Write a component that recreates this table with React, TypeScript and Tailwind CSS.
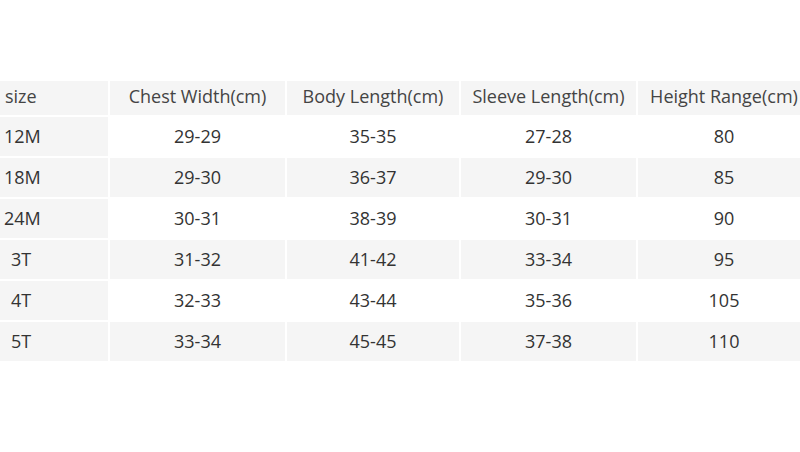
const header = ["size", "Chest Width(cm)", "Body Length(cm)", "Sleeve Length(cm)", "Height Range(cm)"];

const rows = [
  ["12M", "29-29", "35-35", "27-28", "80"],
  ["18M", "29-30", "36-37", "29-30", "85"],
  ["24M", "30-31", "38-39", "30-31", "90"],
  ["3T", "31-32", "41-42", "33-34", "95"],
  ["4T", "32-33", "43-44", "35-36", "105"],
  ["5T", "33-34", "45-45", "37-38", "110"],
];

export default function App() {
  return (
    <div className="h-[452px] w-[800px] overflow-hidden bg-white pt-[81px] font-['Open_Sans',sans-serif] text-[18px] text-[#333]">
      <div className="grid w-[810px] grid-cols-[108px_175px_172px_175px_1fr] gap-[2px]">
        {header.map((h, i) => (
          <div
            key={h}
            className={
              i === 0
                ? "flex h-[34px] items-center bg-[#f5f5f5] pb-[3px] pl-[5px] text-[#444]"
                : "flex h-[34px] items-center justify-center bg-[#f5f5f5] pb-[3px] text-[#444]"
            }
          >
            {h}
          </div>
        ))}
        {rows.map((r, ri) =>
          r.map((c, ci) => {
            const shaded = ci === 0 || ri % 2 === 1;
            const pad = r[0].length === 2 ? "pl-[11px]" : "pl-[4px]";
            return (
              <div
                key={ri + "-" + ci}
                className={
                  (ci === 0 ? "flex h-[39px] items-center " + pad : "flex h-[39px] items-center justify-center") +
                  (shaded ? " bg-[#f5f5f5]" : " bg-white")
                }
              >
                {c}
              </div>
            );
          })
        )}
      </div>
    </div>
  );
}
